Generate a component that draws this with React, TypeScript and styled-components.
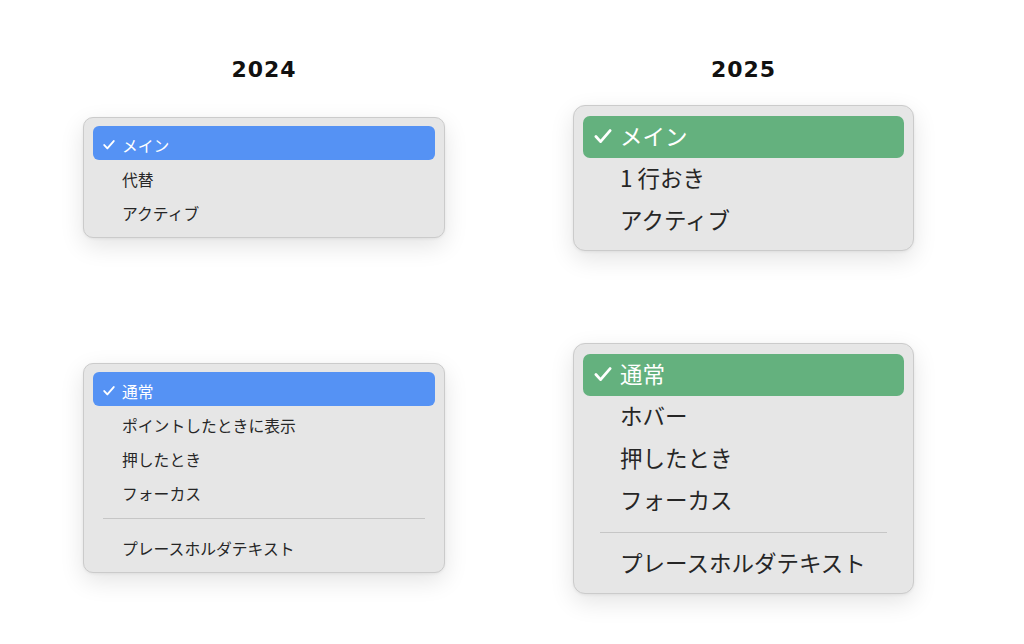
import React, { FC } from 'react';
import styled, { createGlobalStyle } from 'styled-components';

type Size = 'small' | 'large';

type Item = { label: string; checked?: boolean; divider?: boolean };

const metrics = {
  small: {
    width: 362,
    radius: 10,
    padTop: 8,
    padBottom: 9,
    rowHeight: 34,
    font: 15.8,
    textShift: 3,
    checkShift: 2,
    rowRadius: 6,
    checkGap: 19,
    checkWidth: 12,
    checkLeft: 10,
    ruleInset: 10,
    accent: '#5592f4',
  },
  large: {
    width: 341,
    radius: 12,
    padTop: 10,
    padBottom: 8,
    rowHeight: 42,
    font: 22.5,
    textShift: -1,
    checkShift: 0,
    rowRadius: 7,
    checkGap: 26,
    checkWidth: 18,
    checkLeft: 11,
    ruleInset: 17,
    accent: '#64b17e',
  },
};

const GlobalStyle = createGlobalStyle`
  html, body {
    margin: 0;
    padding: 0;
    background: #ffffff;
    overflow: hidden;
  }
  * {
    box-sizing: border-box;
  }
`;

const Page = styled.div`
  width: 1024px;
  height: 644px;
  padding: 56px 0 0 24px;
  font-family: 'Noto Sans CJK JP', 'Noto Sans', sans-serif;
`;

const Grid = styled.div`
  display: grid;
  grid-template-columns: 480px 479px;
`;

const Title = styled.h2`
  margin: 0;
  height: 28px;
  line-height: 28px;
  text-align: center;
  font-family: 'DejaVu Sans', 'Liberation Sans', sans-serif;
  font-weight: 700;
  font-size: 22px;
  letter-spacing: 1px;
  color: #111111;
`;

const Cell = styled.div<{ $height: number; $offset?: number }>`
  height: ${({ $height }) => $height}px;
  margin-top: ${({ $offset }) => $offset ?? 0}px;
  display: flex;
  align-items: center;
  justify-content: center;
`;

const Menu = styled.div<{ $size: Size }>`
  width: ${({ $size }) => metrics[$size].width}px;
  padding: ${({ $size }) => `${metrics[$size].padTop}px 9px ${metrics[$size].padBottom}px`};
  background: #e6e6e6;
  border: 1px solid #cbcbcb;
  border-radius: ${({ $size }) => metrics[$size].radius}px;
  box-shadow: 0 8px 24px rgba(0, 0, 0, 0.11), 0 1px 3px rgba(0, 0, 0, 0.06);
`;

const Row = styled.div<{ $size: Size; $checked?: boolean }>`
  display: flex;
  align-items: center;
  height: ${({ $size }) => metrics[$size].rowHeight}px;
  padding-left: ${({ $size }) => metrics[$size].checkLeft}px;
  border-radius: ${({ $size }) => metrics[$size].rowRadius}px;
  background: ${({ $size, $checked }) => ($checked ? metrics[$size].accent : 'transparent')};
  color: ${({ $checked }) => ($checked ? '#ffffff' : '#262626')};
  font-size: ${({ $size }) => metrics[$size].font}px;
  line-height: 1;
`;

const CheckSlot = styled.span<{ $size: Size }>`
  position: relative;
  top: ${({ $size }) => metrics[$size].checkShift}px;
  display: inline-flex;
  align-items: center;
  width: ${({ $size }) => metrics[$size].checkGap}px;
  flex: none;
`;

const Label = styled.span<{ $size: Size }>`
  position: relative;
  top: ${({ $size }) => metrics[$size].textShift}px;
  white-space: nowrap;
`;

const Rule = styled.hr<{ $size: Size }>`
  margin: 10px ${({ $size }) => metrics[$size].ruleInset}px;
  border: none;
  height: 1px;
  background: #c6c6c6;
`;

const Check: FC<{ size: Size }> = ({ size }) => {
  const w = metrics[size].checkWidth;
  return (
    <svg width={w} height={w * 0.8} viewBox="0 0 16 13" fill="none">
      <path
        d="M1.6 6.8 L5.8 11.4 L14.4 1.4"
        stroke="#ffffff"
        strokeWidth={2.5}
        strokeLinecap="round"
        strokeLinejoin="round"
      />
    </svg>
  );
};

const PopupMenu: FC<{ size: Size; items: Item[] }> = ({ size, items }) => (
  <Menu $size={size}>
    {items.map((item) => (
      <React.Fragment key={item.label}>
        {item.divider && <Rule $size={size} />}
        <Row $size={size} $checked={item.checked}>
          <CheckSlot $size={size}>{item.checked && <Check size={size} />}</CheckSlot>
          <Label $size={size}>{item.label}</Label>
        </Row>
      </React.Fragment>
    ))}
  </Menu>
);

const App: FC = () => (
  <Page>
    <GlobalStyle />
    <Grid>
      <Title>2024</Title>
      <Title>2025</Title>

      <Cell $height={187}>
        <PopupMenu
          size="small"
          items={[{ label: 'メイン', checked: true }, { label: '代替' }, { label: 'アクティブ' }]}
        />
      </Cell>
      <Cell $height={187}>
        <PopupMenu
          size="large"
          items={[{ label: 'メイン', checked: true }, { label: '1 行おき' }, { label: 'アクティブ' }]}
        />
      </Cell>

      <Cell $height={270} $offset={62}>
        <PopupMenu
          size="small"
          items={[
            { label: '通常', checked: true },
            { label: 'ポイントしたときに表示' },
            { label: '押したとき' },
            { label: 'フォーカス' },
            { label: 'プレースホルダテキスト', divider: true },
          ]}
        />
      </Cell>
      <Cell $height={270} $offset={62}>
        <PopupMenu
          size="large"
          items={[
            { label: '通常', checked: true },
            { label: 'ホバー' },
            { label: '押したとき' },
            { label: 'フォーカス' },
            { label: 'プレースホルダテキスト', divider: true },
          ]}
        />
      </Cell>
    </Grid>
  </Page>
);

export default App;
